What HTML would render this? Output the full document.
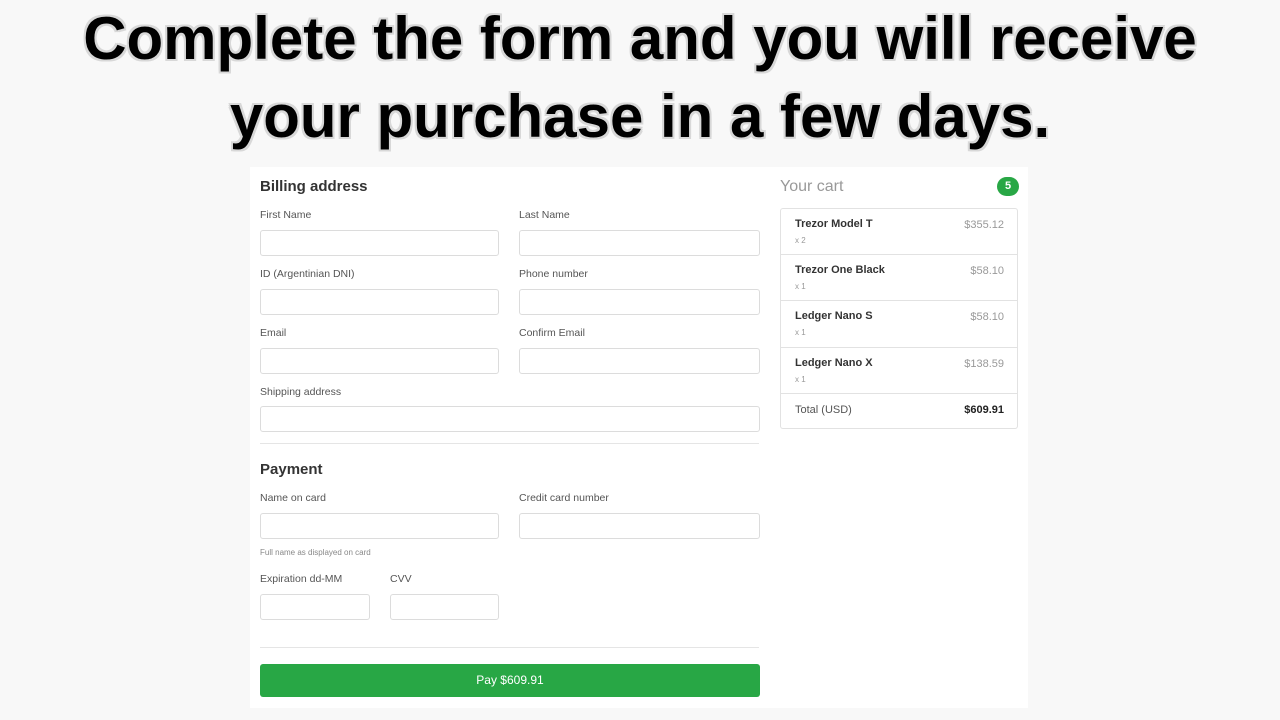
<!DOCTYPE html>
<html><head><style>
*{box-sizing:border-box;margin:0;padding:0}
body{width:1280px;height:720px;background:#f8f8f8;font-family:"Liberation Sans",Arial,sans-serif;position:relative;overflow:hidden}
.t{position:absolute;left:0;width:1280px;text-align:center;font-weight:bold;font-size:60px;color:#000;letter-spacing:0;text-shadow:2px 0 0 #d8d8d8,-2px 0 0 #d8d8d8,0 2px 0 #d8d8d8,0 -2px 0 #d8d8d8,2px 2px 0 #d8d8d8,-2px -2px 0 #d8d8d8,2px -2px 0 #d8d8d8,-2px 2px 0 #d8d8d8}
.card{position:absolute;left:250px;top:167px;width:778px;height:541px;background:#fff}
.a{position:absolute}
h3{position:absolute;font-size:15px;font-weight:bold;color:#333}
.l{position:absolute;font-size:10.5px;color:#555}
.i{position:absolute;height:26px;border:1px solid #dcdcdc;border-radius:3px;background:#fff}
.hr{position:absolute;left:260px;width:499px;height:1px;background:#e5e5e5}
.li{position:absolute;left:780px;width:238px;border:1px solid #e2e2e2;border-top:none;background:#fff}
.li b{position:absolute;left:14px;top:9px;font-size:11px;color:#333}
.li s{text-decoration:none;position:absolute;left:14px;top:27px;font-size:8px;color:#999}
.li span{position:absolute;right:13px;top:10px;font-size:11px;color:#999}
</style></head><body>
<div class="t" style="top:4px">Complete the form and you will receive</div>
<div class="t" style="top:82px">your purchase in a few days.</div>
<div class="card"></div>
<h3 style="left:260px;top:178px">Billing address</h3>
<div class="l" style="left:260px;top:209px">First Name</div><div class="l" style="left:519px;top:209px">Last Name</div>
<div class="i" style="left:260px;top:230px;width:239px"></div><div class="i" style="left:519px;top:230px;width:241px"></div>
<div class="l" style="left:260px;top:268px">ID (Argentinian DNI)</div><div class="l" style="left:519px;top:268px">Phone number</div>
<div class="i" style="left:260px;top:289px;width:239px"></div><div class="i" style="left:519px;top:289px;width:241px"></div>
<div class="l" style="left:260px;top:327px">Email</div><div class="l" style="left:519px;top:327px">Confirm Email</div>
<div class="i" style="left:260px;top:348px;width:239px"></div><div class="i" style="left:519px;top:348px;width:241px"></div>
<div class="l" style="left:260px;top:386px">Shipping address</div>
<div class="i" style="left:260px;top:406px;width:500px"></div>
<div class="hr" style="top:443px"></div>
<h3 style="left:260px;top:461px">Payment</h3>
<div class="l" style="left:260px;top:492px">Name on card</div><div class="l" style="left:519px;top:492px">Credit card number</div>
<div class="i" style="left:260px;top:513px;width:239px"></div><div class="i" style="left:519px;top:513px;width:241px"></div>
<div class="l" style="left:260px;top:548px;font-size:8px;color:#888">Full name as displayed on card</div>
<div class="l" style="left:260px;top:573px">Expiration dd-MM</div><div class="l" style="left:390px;top:573px">CVV</div>
<div class="i" style="left:260px;top:594px;width:110px"></div><div class="i" style="left:390px;top:594px;width:109px"></div>
<div class="hr" style="top:647px"></div>
<div class="a" style="left:260px;top:664px;width:500px;height:33px;background:#28a745;border-radius:3px;color:#fff;font-size:12px;text-align:center;line-height:33px">Pay $609.91</div>
<div class="a" style="left:780px;top:178px;font-size:16px;color:#999">Your cart</div>
<div class="a" style="left:997px;top:177px;width:22px;height:19px;border-radius:10px;background:#28a745;color:#fff;font-size:11px;font-weight:bold;text-align:center;line-height:19px">5</div>
<div class="li" style="top:208px;height:47px;border-top:1px solid #e2e2e2;border-radius:3px 3px 0 0"><b>Trezor Model T</b><s>x 2</s><span>$355.12</span></div>
<div class="li" style="top:255px;height:46px"><b>Trezor One Black</b><s>x 1</s><span>$58.10</span></div>
<div class="li" style="top:301px;height:47px"><b>Ledger Nano S</b><s>x 1</s><span>$58.10</span></div>
<div class="li" style="top:348px;height:46px"><b>Ledger Nano X</b><s>x 1</s><span>$138.59</span></div>
<div class="li" style="top:394px;height:35px;border-radius:0 0 3px 3px"><span style="left:14px;right:auto;color:#555">Total (USD)</span><span style="color:#222;font-weight:bold">$609.91</span></div>
</body></html>
